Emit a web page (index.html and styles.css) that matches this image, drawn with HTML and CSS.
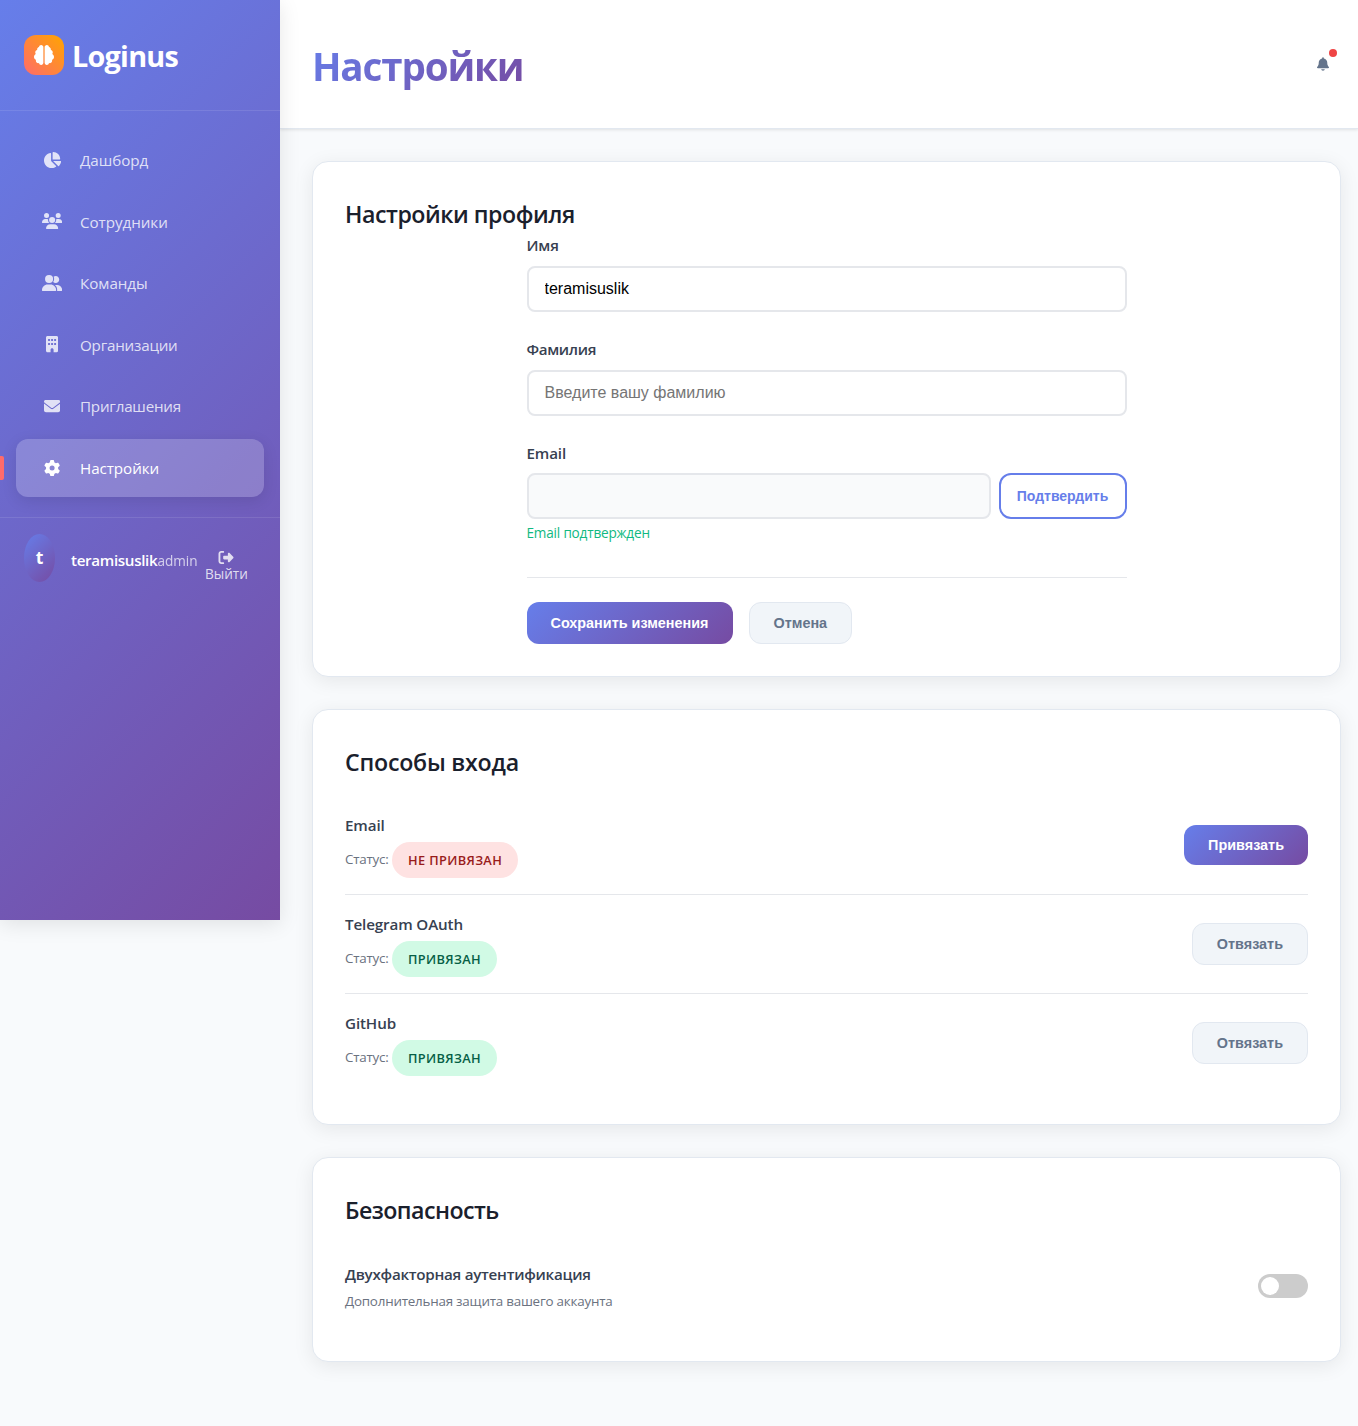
FILE: index.html
```html
<!DOCTYPE html>
<html lang="ru">
<head>
<meta charset="utf-8">
<title>Loginus</title>
<link rel="stylesheet" href="styles.css">
</head>
<body>
<aside class="sidebar">
  <div class="brand">
    <span class="brand-icon"><svg viewBox="0 0 512 512"><path d="M184 0c30.9 0 56 25.1 56 56V456c0 30.9-25.1 56-56 56c-28.9 0-52.7-21.9-55.7-50.1c-5.2 1.4-10.7 2.1-16.3 2.1c-35.3 0-64-28.7-64-64c0-7.4 1.3-14.6 3.6-21.2C21.4 367.4 0 338.2 0 304c0-31.9 18.7-59.5 45.8-72.3C37.1 220.8 32 207 32 192c0-30.7 21.6-56.3 50.4-62.6C80.8 123.9 80 118 80 112c0-29.9 20.6-55.1 48.3-62.1C131.3 21.9 155.1 0 184 0zM328 0c28.9 0 52.6 21.9 55.7 49.9c27.8 7 48.3 32.1 48.3 62.1c0 6-.8 11.9-2.4 17.4c28.8 6.2 50.4 31.9 50.4 62.6c0 15-5.1 28.8-13.8 39.7C493.3 244.5 512 272.1 512 304c0 34.2-21.4 63.4-51.6 74.8c2.3 6.6 3.6 13.8 3.6 21.2c0 35.3-28.7 64-64 64c-5.6 0-11.1-.7-16.3-2.1c-3 28.2-26.8 50.1-55.7 50.1c-30.9 0-56-25.1-56-56V56c0-30.9 25.1-56 56-56z"/></svg></span>
    <span class="brand-name">Loginus</span>
  </div>
  <nav class="nav">
    <a class="nav-item"><span class="nav-icon"><svg viewBox="0 0 576 512"><path d="M304 240V16.6c0-9 7-16.6 16-16.6C443.7 0 544 100.3 544 224c0 9-7.6 16-16.6 16H304zM32 272C32 150.7 122.1 50.3 239 34.3c9.2-1.3 17 6.1 17 15.4V288L412.5 444.5c6.7 6.7 6.2 17.7-1.5 23.1C371.8 495.6 323.8 512 272 512C139.5 512 32 404.6 32 272zm526.4 16c9.3 0 16.6 7.8 15.4 17c-7.7 55.9-34.6 105.6-73.9 142.3c-6 5.6-15.4 5.2-21.2-.7L320 288H558.4z"/></svg></span><span>Дашборд</span></a>
    <a class="nav-item"><span class="nav-icon"><svg viewBox="0 0 640 512"><path d="M144 0a80 80 0 1 1 0 160A80 80 0 1 1 144 0zM512 0a80 80 0 1 1 0 160A80 80 0 1 1 512 0zM0 298.7C0 239.8 47.8 192 106.7 192h42.7c15.9 0 31 3.5 44.6 9.7c-1.3 7.2-1.9 14.7-1.9 22.3c0 38.2 16.8 72.5 43.3 96c-.2 0-.4 0-.7 0H21.3C9.6 320 0 310.4 0 298.7zM405.3 320c-.2 0-.4 0-.7 0c26.6-23.5 43.3-57.8 43.3-96c0-7.6-.7-15-1.9-22.3c13.6-6.3 28.7-9.7 44.6-9.7h42.7C592.2 192 640 239.8 640 298.7c0 11.8-9.6 21.3-21.3 21.3H405.3zM224 224a96 96 0 1 1 192 0 96 96 0 1 1 -192 0zM128 485.3C128 411.7 187.7 352 261.3 352H378.7C452.3 352 512 411.7 512 485.3c0 14.7-11.9 26.7-26.7 26.7H154.7c-14.7 0-26.7-11.9-26.7-26.7z"/></svg></span><span class="low">Сотрудники</span></a>
    <a class="nav-item"><span class="nav-icon"><svg viewBox="0 0 640 512"><path d="M96 128a128 128 0 1 1 256 0A128 128 0 1 1 96 128zM0 482.3C0 383.8 79.8 304 178.3 304h91.4C368.2 304 448 383.8 448 482.3c0 16.4-13.3 29.7-29.7 29.7H29.7C13.3 512 0 498.7 0 482.3zM609.3 512H471.4c5.4-9.4 8.6-20.3 8.6-32v-8c0-60.7-27.1-115.2-69.8-151.8c2.4-.1 4.7-.2 7.1-.2h61.4C567.8 320 640 392.2 640 481.3c0 17-13.8 30.7-30.7 30.7zM432 256c-31 0-59-12.6-79.3-32.9C372.4 196.5 384 163.6 384 128c0-26.8-6.6-52.1-18.3-74.3C384.3 40.1 407.2 32 432 32c61.9 0 112 50.1 112 112s-50.1 112-112 112z"/></svg></span><span>Команды</span></a>
    <a class="nav-item"><span class="nav-icon"><svg viewBox="0 0 384 512"><path d="M48 0C21.5 0 0 21.5 0 48V464c0 26.5 21.5 48 48 48h96V432c0-26.5 21.5-48 48-48s48 21.5 48 48v80h96c26.5 0 48-21.5 48-48V48c0-26.5-21.5-48-48-48H48zM64 240c0-8.8 7.2-16 16-16h32c8.8 0 16 7.2 16 16v32c0 8.8-7.2 16-16 16H80c-8.8 0-16-7.2-16-16V240zm112-16h32c8.8 0 16 7.2 16 16v32c0 8.8-7.2 16-16 16H176c-8.8 0-16-7.2-16-16V240c0-8.8 7.2-16 16-16zm80 16c0-8.8 7.2-16 16-16h32c8.8 0 16 7.2 16 16v32c0 8.8-7.2 16-16 16H272c-8.8 0-16-7.2-16-16V240zM80 96h32c8.8 0 16 7.2 16 16v32c0 8.8-7.2 16-16 16H80c-8.8 0-16-7.2-16-16V112c0-8.8 7.2-16 16-16zm80 16c0-8.8 7.2-16 16-16h32c8.8 0 16 7.2 16 16v32c0 8.8-7.2 16-16 16H176c-8.8 0-16-7.2-16-16V112zM272 96h32c8.8 0 16 7.2 16 16v32c0 8.8-7.2 16-16 16H272c-8.8 0-16-7.2-16-16V112c0-8.8 7.2-16 16-16z"/></svg></span><span class="tight low">Организации</span></a>
    <a class="nav-item"><span class="nav-icon"><svg viewBox="0 0 512 512"><path d="M48 64C21.5 64 0 85.5 0 112c0 15.1 7.1 29.3 19.2 38.4L236.8 313.6c11.4 8.5 27 8.5 38.4 0L492.8 150.4c12.1-9.1 19.2-23.3 19.2-38.4c0-26.5-21.5-48-48-48H48zM0 176V384c0 35.3 28.7 64 64 64H448c35.3 0 64-28.7 64-64V176L294.4 339.2c-22.8 17.1-54 17.1-76.8 0L0 176z"/></svg></span><span class="tight">Приглашения</span></a>
    <a class="nav-item active"><span class="nav-icon"><svg viewBox="0 0 512 512"><path d="M495.9 166.6c3.2 8.7 .5 18.4-6.4 24.6l-43.3 39.4c1.1 8.3 1.7 16.8 1.7 25.4s-.6 17.1-1.7 25.4l43.3 39.4c6.9 6.2 9.6 15.9 6.4 24.6c-4.4 11.9-9.7 23.3-15.8 34.3l-4.7 8.1c-6.6 11-14 21.4-22.1 31.2c-5.9 7.2-15.7 9.6-24.5 6.8l-55.7-17.7c-13.4 10.3-28.2 18.9-44 25.4l-12.5 57.1c-2 9.1-9 16.3-18.2 17.8c-13.8 2.3-28 3.5-42.5 3.5s-28.7-1.2-42.5-3.5c-9.2-1.5-16.2-8.7-18.2-17.8l-12.5-57.1c-15.8-6.5-30.6-15.1-44-25.4L83.1 425.9c-8.8 2.8-18.6 .3-24.5-6.8c-8.1-9.8-15.5-20.2-22.1-31.2l-4.7-8.1c-6.1-11-11.4-22.4-15.8-34.3c-3.2-8.7-.5-18.4 6.4-24.6l43.3-39.4C64.6 273.1 64 264.6 64 256s.6-17.1 1.7-25.4L22.4 191.2c-6.9-6.2-9.6-15.9-6.4-24.6c4.4-11.9 9.7-23.3 15.8-34.3l4.7-8.1c6.6-11 14-21.4 22.1-31.2c5.9-7.2 15.7-9.6 24.5-6.8l55.7 17.7c13.4-10.3 28.2-18.9 44-25.4l12.5-57.1c2-9.1 9-16.3 18.2-17.8C227.3 1.2 241.5 0 256 0s28.7 1.2 42.5 3.5c9.2 1.5 16.2 8.7 18.2 17.8l12.5 57.1c15.8 6.5 30.6 15.1 44 25.4l55.7-17.7c8.8-2.8 18.6-.3 24.5 6.8c8.1 9.8 15.5 20.2 22.1 31.2l4.7 8.1c6.1 11 11.4 22.4 15.8 34.3zM256 336a80 80 0 1 0 0-160 80 80 0 1 0 0 160z"/></svg></span><span>Настройки</span></a>
  </nav>
  <div class="account">
    <span class="avatar">t</span>
    <span class="account-info"><b class="account-name">teramisuslik</b><span class="account-role">admin</span></span>
    <a class="logout"><svg viewBox="0 0 512 512"><path d="M377.9 105.9L500.7 228.7c7.2 7.2 11.3 17.1 11.3 27.3s-4.1 20.1-11.3 27.3L377.9 406.1c-6.4 6.4-15 9.9-24 9.9c-18.7 0-33.9-15.2-33.9-33.9l0-62.1-128 0c-17.7 0-32-14.3-32-32l0-64c0-17.7 14.3-32 32-32l128 0 0-62.1c0-18.7 15.2-33.9 33.9-33.9c9 0 17.6 3.6 24 9.9zM160 96L96 96c-17.7 0-32 14.3-32 32l0 256c0 17.7 14.3 32 32 32l64 0c17.7 0 32 14.3 32 32s-14.3 32-32 32l-64 0c-53 0-96-43-96-96L0 128C0 75 43 32 96 32l64 0c17.7 0 32 14.3 32 32s-14.3 32-32 32z"/></svg><span>Выйти</span></a>
  </div>
</aside>
<main class="main">
  <header class="header">
    <h1 class="title">Настройки</h1>
    <span class="bell"><svg viewBox="0 0 448 512"><path d="M224 0c-17.7 0-32 14.3-32 32V51.2C119 66 64 130.6 64 208v18.8c0 47-17.3 92.4-48.5 127.6l-7.4 8.3c-8.4 9.4-10.4 22.9-5.3 34.4S19.4 416 32 416H416c12.6 0 24-7.4 29.2-18.9s3.1-25-5.3-34.4l-7.4-8.3C401.3 319.2 384 273.9 384 226.8V208c0-77.4-55-142-128-156.8V32c0-17.7-14.3-32-32-32zm45.3 493.3c12-12 18.7-28.3 18.7-45.3H224 160c0 17 6.7 33.3 18.7 45.3s28.3 18.7 45.3 18.7s33.3-6.7 45.3-18.7z"/></svg><i class="bell-dot"></i></span>
  </header>
  <div class="content">
    <section class="card">
      <h2 class="card-title title-profile">Настройки профиля</h2>
      <form class="form">
        <div class="group">
          <label class="label">Имя</label>
          <input class="input" type="text" value="teramisuslik">
        </div>
        <div class="group">
          <label class="label label-surname">Фамилия</label>
          <input class="input" type="text" placeholder="Введите вашу фамилию">
        </div>
        <div class="group">
          <label class="label">Email</label>
          <div class="email-row">
            <input class="input" type="email" disabled>
            <button class="btn btn-outline" type="button">Подтвердить</button>
          </div>
          <div class="hint">Email подтвержден</div>
        </div>
        <div class="actions">
          <button class="btn btn-primary" type="button">Сохранить изменения</button>
          <button class="btn btn-secondary" type="button">Отмена</button>
        </div>
      </form>
    </section>
    <section class="card">
      <h2 class="card-title title-login">Способы входа</h2>
      <div class="rows rows-login">
        <div class="row">
          <div><div class="row-name">Email</div><div class="row-status"><span class="status-label">Статус:</span><span class="pill pill-off">Не привязан</span></div></div>
          <button class="btn btn-primary" type="button">Привязать</button>
        </div>
        <div class="row">
          <div><div class="row-name">Telegram OAuth</div><div class="row-status"><span class="status-label">Статус:</span><span class="pill pill-on">Привязан</span></div></div>
          <button class="btn btn-secondary" type="button">Отвязать</button>
        </div>
        <div class="row">
          <div><div class="row-name">GitHub</div><div class="row-status"><span class="status-label">Статус:</span><span class="pill pill-on">Привязан</span></div></div>
          <button class="btn btn-secondary" type="button">Отвязать</button>
        </div>
      </div>
    </section>
    <section class="card">
      <h2 class="card-title title-security">Безопасность</h2>
      <div class="rows">
        <div class="row">
          <div><div class="row-name twofa">Двухфакторная аутентификация</div><div class="row-desc">Дополнительная защита вашего аккаунта</div></div>
          <span class="toggle"></span>
        </div>
      </div>
    </section>
  </div>
</main>
</body>
</html>
```
FILE: styles.css
```css
* { box-sizing: border-box; margin: 0; padding: 0; }

body {
  min-height: 1426px;
  display: flex;
  align-items: flex-start;
  background: #f8fafc;
  color: #1a202c;
  font-family: "Open Sans", "Noto Sans", sans-serif;
  font-size: 16px;
  line-height: 1.6;
}

svg { display: block; fill: currentColor; }

/* Sidebar */
.sidebar {
  position: relative;
  z-index: 2;
  flex: none;
  width: 280px;
  height: 920px;
  background: linear-gradient(135deg, #667eea 0%, #764ba2 100%);
  box-shadow: 0 4px 20px rgba(0, 0, 0, 0.1);
  color: #fff;
}

.brand {
  display: flex;
  align-items: center;
  gap: 8px;
  height: 111px;
  padding: 0 24px;
  border-bottom: 1px solid rgba(255, 255, 255, 0.1);
}

.brand-icon {
  display: grid;
  place-items: center;
  width: 40px;
  height: 40px;
  border-radius: 12px;
  background: linear-gradient(45deg, #ff6b6b, #ffa500);
}

.brand-icon svg { width: 20px; height: 20px; }

.brand-name {
  padding-top: 3px;
  font-size: 28.8px;
  font-weight: 700;
  letter-spacing: -0.75px;
}

.nav {
  display: flex;
  flex-direction: column;
  gap: 4px;
  padding: 20px 16px;
}

.nav-item {
  position: relative;
  display: flex;
  align-items: center;
  gap: 16px;
  height: 57.6px;
  padding: 0 24px;
  border-radius: 12px;
  color: rgba(255, 255, 255, 0.8);
  font-size: 15.2px;
  font-weight: 500;
  letter-spacing: -0.05px;
}

.tight { letter-spacing: -0.22px; }
.low { padding-top: 1px; }

.nav-icon {
  display: flex;
  justify-content: center;
  width: 24px;
}

.nav-icon svg { flex: none; height: 16.2px; }

.nav-item.active {
  background: rgba(255, 255, 255, 0.2);
  box-shadow: 0 4px 15px rgba(0, 0, 0, 0.1);
  color: #fff;
}

.nav-item.active::before {
  content: "";
  position: absolute;
  left: -16px;
  top: 17px;
  width: 4px;
  height: 24px;
  border-radius: 0 2px 2px 0;
  background: #ff6b6b;
}

.account {
  display: flex;
  align-items: center;
  padding: 16px 24px;
  border-top: 1px solid rgba(255, 255, 255, 0.1);
}

.avatar {
  display: grid;
  place-items: center;
  flex: none;
  width: 31px;
  height: 48px;
  margin-right: 16px;
  border-radius: 50%;
  background: linear-gradient(135deg, #667eea, #764ba2);
  font-size: 17.6px;
  font-weight: 700;
}

.account-info {
  display: flex;
  align-items: baseline;
  width: 134px;
  padding-top: 5px;
  white-space: nowrap;
}

.account-name {
  font-size: 15.2px;
  font-weight: 600;
  letter-spacing: -0.34px;
}

.account-role {
  font-size: 13.6px;
  opacity: 0.7;
}

.logout {
  display: flex;
  flex-direction: column;
  align-items: center;
  padding-top: 16px;
  color: rgba(255, 255, 255, 0.8);
  font-size: 13.6px;
  font-weight: 500;
  line-height: 17px;
}

.logout svg { width: 16px; height: 15px; }

/* Page header */
.main { flex: 1; min-width: 0; }

.header {
  display: flex;
  align-items: center;
  justify-content: space-between;
  height: 129px;
  padding: 0 29px 0 32px;
  background: #fff;
  border-bottom: 1px solid #e2e8f0;
  box-shadow: 0 1px 3px rgba(0, 0, 0, 0.1);
}

.title {
  padding-top: 5px;
  background: linear-gradient(135deg, #667eea, #764ba2);
  background-clip: text;
  -webkit-background-clip: text;
  color: transparent;
  font-size: 38.6px;
  font-weight: 700;
  letter-spacing: -1.15px;
}

.bell { position: relative; color: #64748b; }
.bell svg { width: 12px; height: 14px; }

.bell-dot {
  position: absolute;
  top: -8px;
  right: -8px;
  width: 8px;
  height: 8px;
  border-radius: 50%;
  background: #ef4444;
}

/* Cards */
.content {
  display: flex;
  flex-direction: column;
  gap: 32px;
  padding: 32px 17px 64px 32px;
}

.card {
  padding: 32px;
  background: #fff;
  border: 1px solid #e2e8f0;
  border-radius: 16px;
  box-shadow: 0 4px 20px rgba(0, 0, 0, 0.08);
}

.card-title {
  height: 38.4px;
  font-size: 23.2px;
  font-weight: 600;
  line-height: 41px;
  white-space: nowrap;
}

.title-profile { letter-spacing: -0.47px; }
.title-login { letter-spacing: -0.23px; }
.title-security { letter-spacing: -0.55px; }

/* Profile form */
.form { width: 600px; margin: 0 auto; }
.group { margin-bottom: 24px; }

.label {
  display: block;
  margin-bottom: 6px;
  color: #374151;
  font-size: 15.2px;
  font-weight: 600;
  line-height: 27.6px;
  letter-spacing: -0.15px;
}

.label-surname { letter-spacing: -0.35px; }

.input {
  display: block;
  width: 100%;
  height: 46px;
  padding: 0 16px;
  background: #fff;
  border: 2px solid #e5e7eb;
  border-radius: 8px;
  color: #000;
  font-family: "Liberation Sans", Arial, sans-serif;
  font-size: 16px;
}

.input::placeholder { color: #757575; }
.input:disabled { background: #f9fafb; }

.email-row { display: flex; gap: 8px; }

.hint {
  margin-top: 4px;
  color: #10b981;
  font-size: 13.6px;
  line-height: 19px;
  letter-spacing: -0.2px;
}

.actions {
  display: flex;
  gap: 16px;
  margin-top: 35px;
  padding-top: 24px;
  border-top: 1px solid #e5e7eb;
}

.btn {
  flex: none;
  height: 42px;
  padding: 0 24px;
  border: 1px solid transparent;
  border-radius: 12px;
  font-family: "Liberation Sans", Arial, sans-serif;
  font-size: 14.4px;
  font-weight: 700;
  white-space: nowrap;
}

.btn-primary {
  border: 0;
  background: linear-gradient(135deg, #667eea, #764ba2);
  color: #fff;
}

.row .btn-primary { height: 40px; }
.actions .btn-primary { width: 206px; padding: 0 23px; }

.btn-secondary {
  background: #f1f5f9;
  border-color: #e2e8f0;
  color: #64748b;
}

.email-row .btn-outline {
  width: 128px;
  height: 46px;
  padding: 0;
  background: #fff;
  border: 2px solid #667eea;
  color: #667eea;
  font-size: 14px;
}

/* Setting rows */
.rows { margin-top: 16px; }
.rows-login { margin-top: 15px; }

.row {
  display: flex;
  align-items: center;
  justify-content: space-between;
  padding: 16px 0;
  border-bottom: 1px solid #e5e7eb;
}

.row:last-child { border-bottom: 0; }

.row-name {
  margin-bottom: 4px;
  color: #374151;
  font-size: 15.2px;
  font-weight: 600;
  line-height: 26px;
  letter-spacing: -0.13px;
}

.twofa {
  margin-bottom: 3px;
  padding-top: 1px;
  letter-spacing: -0.27px;
}

.row-status {
  display: flex;
  align-items: center;
  gap: 3.5px;
}

.status-label,
.row-desc {
  color: #6b7280;
  font-size: 13.4px;
  letter-spacing: -0.22px;
}

.row-desc { line-height: 22.6px; }

.pill {
  height: 36px;
  padding: 0 16px;
  border-radius: 20px;
  font-size: 12.8px;
  font-weight: 600;
  line-height: 36px;
  letter-spacing: 0.35px;
  text-transform: uppercase;
}

.pill-off { background: #fee2e2; color: #991b1b; }
.pill-on { background: #d1fae5; color: #065f46; }

.toggle {
  display: flex;
  align-items: center;
  width: 50px;
  height: 24px;
  padding: 0 3px;
  border-radius: 24px;
  background: #ccc;
}

.toggle::before {
  content: "";
  width: 18px;
  height: 18px;
  border-radius: 50%;
  background: #fff;
}
```
